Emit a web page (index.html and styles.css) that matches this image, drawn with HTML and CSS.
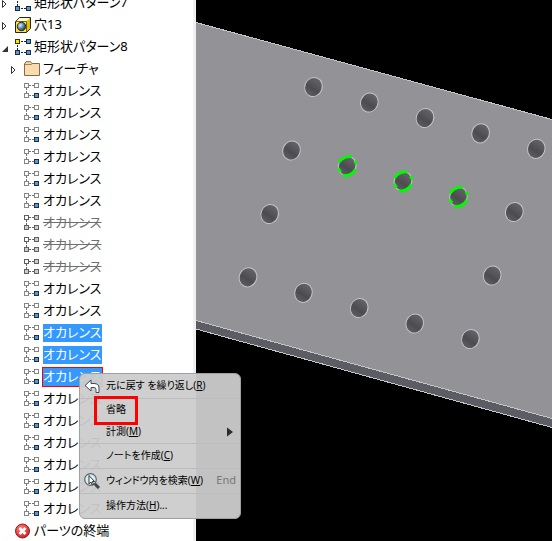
FILE: index.html
```
<!DOCTYPE html>
<html lang="ja">
<head>
<meta charset="utf-8">
<meta name="viewport" content="width=device-width, initial-scale=1">
<title>矩形状パターン</title>
<link rel="stylesheet" href="styles.css">
</head>
<body>
<svg class="defs" aria-hidden="true">
  <defs>
    <linearGradient id="hole-shade" x1="0.6" y1="0" x2="0.4" y2="1">
      <stop offset="0" stop-color="#65656c"/><stop offset="0.6" stop-color="#4c4c50"/><stop offset="1" stop-color="#5d5d64"/>
    </linearGradient>
    <radialGradient id="ball" cx="0.35" cy="0.35" r="0.7">
      <stop offset="0" stop-color="#e4f0fa"/><stop offset="0.45" stop-color="#7199c2"/><stop offset="1" stop-color="#1c3049"/>
    </radialGradient>
    <radialGradient id="red" cx="0.4" cy="0.35" r="0.7">
      <stop offset="0" stop-color="#ff8a80"/><stop offset="1" stop-color="#d3141c"/>
    </radialGradient>
    <symbol id="i-pattern" viewBox="0 0 16 16">
      <path d="M6 2.500h2M9 2.500h2M6 13.500h2M9 13.500h2M2.500 6v2M2.500 9v2" stroke="#222" fill="none"/>
      <rect x="0.500" y="0.500" width="4" height="4" fill="#ffe600" stroke="#3c3400"/>
      <g fill="#5b9bd5" stroke="#1a2b3c"><rect x="11.500" y="0.500" width="4" height="4"/><rect x="0.500" y="11.500" width="4" height="4"/><rect x="11.500" y="11.500" width="4" height="4"/></g>
    </symbol>
    <symbol id="i-occ" viewBox="0 0 16 16">
      <path d="M5 2.500h2M8 2.500h2M5 12.500h2M8 12.500h2M2.500 5v2M2.500 8v2" stroke="#777" fill="none"/>
      <g fill="#fff" stroke="#858585"><rect x="0.500" y="0.500" width="4" height="4"/><rect x="10.500" y="0.500" width="4" height="4"/><rect x="0.500" y="10.500" width="4" height="4"/></g>
      <rect x="10.500" y="10.500" width="4" height="4" fill="#5b9bd5" stroke="#1b2d40"/>
    </symbol>
    <symbol id="i-off" viewBox="0 0 16 16">
      <path d="M5 2.500h2M8 2.500h2M5 12.500h2M8 12.500h2M2.500 5v2M2.500 8v2" stroke="#666" fill="none"/>
      <g fill="#ccc" stroke="#606060"><rect x="0.500" y="0.500" width="4" height="4" fill="#fff"/><rect x="10.500" y="0.500" width="4" height="4"/><rect x="0.500" y="10.500" width="4" height="4"/><rect x="10.500" y="10.500" width="4" height="4"/></g>
    </symbol>
    <symbol id="i-hole" viewBox="0 0 16 16">
      <path d="M0.500 4.500L4.500 0.500H15.500V11.500L11.500 15.500H0.500Z" fill="#ffe33a" stroke="#222"/>
      <path d="M1 4.500L4.700 1H15L11.500 4.500Z" fill="#fffbd6"/>
      <path d="M11.500 4.500L15 1V11.300L11.500 15Z" fill="#e8bd00"/>
      <path d="M1 4.500H11.500V15" fill="none" stroke="#77620a"/>
      <circle cx="6.500" cy="9.500" r="4.200" fill="url(#ball)" stroke="#1c2c40"/>
    </symbol>
    <symbol id="i-folder" viewBox="0 0 16 16">
      <path d="M0.500 3L2 0.700H6.500L8 2.500H15.500V14.500H0.500Z" fill="#f6dcae" stroke="#8c6647"/>
      <path d="M1 3.500H7L8.500 2.700" fill="none" stroke="#a67d58"/>
    </symbol>
    <symbol id="i-end" viewBox="0 0 16 16">
      <circle cx="7.500" cy="8" r="7" fill="url(#red)" stroke="#8e2326"/>
      <path d="M4.500 5L10.500 11M10.500 5L4.500 11" stroke="#fff" stroke-width="2.600"/>
    </symbol>
    <symbol id="i-closed" viewBox="0 0 8 10"><path d="M1.500 1.500L5 5L1.500 8.500Z" fill="#fff" stroke="#333"/></symbol>
    <symbol id="i-open" viewBox="0 0 8 10"><path d="M7 3V9H1Z" fill="#333"/></symbol>
  </defs>
</svg>
<main class="app">
  <nav class="browser" aria-label="モデル">
    <ul class="tree">
      <li class="row"><button class="toggle" aria-label="展開"><svg><use href="#i-closed"/></svg></button><svg class="icon"><use href="#i-pattern"/></svg><span class="name">矩形状パターン7</span></li>
      <li class="row"><button class="toggle" aria-label="展開"><svg><use href="#i-closed"/></svg></button><svg class="icon"><use href="#i-hole"/></svg><span class="name">穴13</span></li>
      <li class="row"><button class="toggle" aria-label="折りたたむ"><svg><use href="#i-open"/></svg></button><svg class="icon"><use href="#i-pattern"/></svg><span class="name">矩形状パターン8</span></li>
      <li>
        <ul class="branch">
          <li class="row"><button class="toggle" aria-label="展開"><svg><use href="#i-closed"/></svg></button><svg class="icon"><use href="#i-folder"/></svg><span class="name">フィーチャ</span></li>
          <li class="row"><svg class="icon"><use href="#i-occ"/></svg><span class="name">オカレンス</span></li>
          <li class="row"><svg class="icon"><use href="#i-occ"/></svg><span class="name">オカレンス</span></li>
          <li class="row"><svg class="icon"><use href="#i-occ"/></svg><span class="name">オカレンス</span></li>
          <li class="row"><svg class="icon"><use href="#i-occ"/></svg><span class="name">オカレンス</span></li>
          <li class="row"><svg class="icon"><use href="#i-occ"/></svg><span class="name">オカレンス</span></li>
          <li class="row"><svg class="icon"><use href="#i-occ"/></svg><span class="name">オカレンス</span></li>
          <li class="row off"><svg class="icon"><use href="#i-off"/></svg><span class="name">オカレンス</span></li>
          <li class="row off"><svg class="icon"><use href="#i-off"/></svg><span class="name">オカレンス</span></li>
          <li class="row off"><svg class="icon"><use href="#i-off"/></svg><span class="name">オカレンス</span></li>
          <li class="row"><svg class="icon"><use href="#i-occ"/></svg><span class="name">オカレンス</span></li>
          <li class="row"><svg class="icon"><use href="#i-occ"/></svg><span class="name">オカレンス</span></li>
          <li class="row selected"><svg class="icon"><use href="#i-occ"/></svg><span class="name">オカレンス</span></li>
          <li class="row selected"><svg class="icon"><use href="#i-occ"/></svg><span class="name">オカレンス</span></li>
          <li class="row selected current"><svg class="icon"><use href="#i-occ"/></svg><span class="name">オカレンス</span></li>
          <li class="row"><svg class="icon"><use href="#i-occ"/></svg><span class="name">オカレンス</span></li>
          <li class="row"><svg class="icon"><use href="#i-occ"/></svg><span class="name">オカレンス</span></li>
          <li class="row"><svg class="icon"><use href="#i-occ"/></svg><span class="name">オカレンス</span></li>
          <li class="row"><svg class="icon"><use href="#i-occ"/></svg><span class="name">オカレンス</span></li>
          <li class="row"><svg class="icon"><use href="#i-occ"/></svg><span class="name">オカレンス</span></li>
          <li class="row"><svg class="icon"><use href="#i-occ"/></svg><span class="name">オカレンス</span></li>
        </ul>
      </li>
      <li class="row"><svg class="icon"><use href="#i-end"/></svg><span class="name">パーツの終端</span></li>
    </ul>
  </nav>
  <section class="view" aria-label="3D ビュー">
    <svg class="model" viewBox="196 0 356 541" preserveAspectRatio="xMinYMin slice">
      <defs>
        <g id="hole"><ellipse rx="8.700" ry="9.700" transform="rotate(22)" fill="url(#hole-shade)" stroke="#c4c4c6"/></g>
        <g id="lit"><use href="#hole"/><g fill="none" stroke="#00fa00" stroke-width="3"><path d="M-8.500 -3.500Q-4 -10 4.500 -9.500M-4.500 9.300Q4 11 8.500 3"/><path d="M7.500 -5L9.500 -2M-9 2.500L-6.500 6"/></g></g>
      </defs>
      <path d="M196 320.500L552 418.500V427.500L196 329Z" fill="#5c5c64"/>
      <path d="M196 22.500L552 119.500V418.500L196 320.500Z" fill="#939297"/>
      <path class="edge" d="M196 22.500L552 119.500M196 320.500L552 418.500M196 329L552 427.500" fill="none" stroke="#c6c6c8"/>
      <use href="#hole" x="313.500" y="87"/><use href="#hole" x="369.300" y="102.500"/><use href="#hole" x="425" y="118"/><use href="#hole" x="480.600" y="133.300"/><use href="#hole" x="536.300" y="148.800"/>
      <use href="#hole" x="291.500" y="150.500"/><use href="#lit" x="347.200" y="166"/><use href="#lit" x="403" y="181.300"/><use href="#lit" x="458.500" y="196.800"/><use href="#hole" x="514.300" y="212"/>
      <use href="#hole" x="269.700" y="214"/><use href="#hole" x="492.200" y="275.500"/>
      <use href="#hole" x="248" y="277.300"/><use href="#hole" x="303.500" y="292.800"/><use href="#hole" x="359.200" y="308"/><use href="#hole" x="414.700" y="323.500"/><use href="#hole" x="470.400" y="339"/>
    </svg>
  </section>
  <div class="menu" role="menu">
    <button class="item" role="menuitem"><svg class="glyph" viewBox="0 0 16 16"><path d="M1 7.500L7 2V5.500H10Q15 5.500 15 10V14.500H12V11.500Q12 9.500 10 9.500H7V13Z" fill="#fff" stroke="#424850" stroke-linejoin="round"/></svg><span class="label">元に戻す を繰り返し(<u>R</u>)</span></button>
    <hr>
    <button class="item short marked" role="menuitem"><span class="label">省略</span></button>
    <button class="item short" role="menuitem"><span class="label">計測(<u>M</u>)</span><svg class="more" viewBox="0 0 6 10"><path d="M0 0.500L6 5L0 9.500Z" fill="#2b2b2b"/></svg></button>
    <hr>
    <button class="item" role="menuitem"><span class="label">ノートを作成(<u>C</u>)</span></button>
    <hr>
    <button class="item" role="menuitem"><svg class="glyph" viewBox="0 0 16 16"><path d="M10.500 10.500L15 15" stroke="#3f4650" stroke-width="3"/><circle cx="6.500" cy="6.500" r="5.800" fill="#d9eef5" stroke="#596670" stroke-width="1.200"/><path d="M5 2.500V11L7 9L8.200 12L9.500 11.300L8.300 8.500H10.500Z" fill="#fff" stroke="#222" stroke-width="0.900"/></svg><span class="label">ウィンドウ内を検索(<u>W</u>)</span><kbd>End</kbd></button>
    <hr>
    <button class="item" role="menuitem"><span class="label">操作方法(<u>H</u>)...</span></button>
  </div>
</main>
</body>
</html>
```
FILE: styles.css
```
*, *::after { box-sizing: border-box; }

body {
  margin: 0;
  background: #000;
  color: #000;
  font-family: "Noto Sans", "Noto Sans CJK JP", sans-serif;
  font-feature-settings: "palt";
}

.defs { position: absolute; width: 0; height: 0; }

.app {
  position: relative;
  display: flex;
  height: 100vh;
  overflow: hidden;
}

.browser {
  flex: 0 0 196px;
  overflow: hidden;
  background: #fff;
  border-right: 3px solid #f0f0f0;
}

ul { margin: 0; padding: 0; list-style: none; }

/* The list is scrolled by part of a row */
.tree { margin-top: -8px; }

.branch { padding-left: 9px; }

.row {
  display: grid;
  grid-template-columns: 15px 16px auto;
  justify-content: start;
  align-items: center;
  height: 22px;
  font-size: 13px;
  line-height: 16px;
  white-space: nowrap;
}

.toggle {
  display: flex;
  padding: 2px 0 0 1px;
  border: 0;
  background: none;
}

.toggle svg { width: 8px; height: 10px; }

.icon { grid-column: 2; width: 16px; height: 16px; }

.name { grid-column: 3; height: 18px; margin-left: 3px; }

.off .name { color: #6e6e6e; text-decoration: line-through; }

.selected .name { padding-right: 1px; background: #3399ff; color: #fff; }

.current .name { outline: 1px solid #f00; }

.view { flex: 1; min-width: 0; }

.model { display: block; width: 100%; height: 100%; }

.edge { shape-rendering: crispEdges; }

.menu {
  position: absolute;
  left: 79px;
  top: 373px;
  width: 162px;
  border: 1px solid #a0a0a0;
  border-radius: 6px;
  background: rgba(204, 204, 204, 0.95);
}

.menu hr {
  height: 1px;
  margin: 0;
  border: 0;
  background: #bdbdbd;
}

.item {
  position: relative;
  display: grid;
  grid-template-columns: 16px 1fr auto;
  column-gap: 6px;
  align-items: center;
  width: 100%;
  height: 24px;
  padding: 0 4px;
  border: 0;
  background: none;
  color: #000;
  font: inherit;
  font-feature-settings: inherit;
  font-size: 10px;
  line-height: 16px;
  text-align: left;
  white-space: nowrap;
}

.short { height: 22px; }

.glyph { width: 16px; height: 16px; }

.label { grid-column: 2; padding-bottom: 2px; }

.more { width: 6px; height: 10px; margin-right: 3px; }

kbd { padding-bottom: 2px; color: #777; font: inherit; font-size: 11px; }

.marked::after {
  content: "";
  position: absolute;
  left: 14px;
  top: -3px;
  width: 44px;
  height: 29px;
  border: 3px solid #f00;
}
```
